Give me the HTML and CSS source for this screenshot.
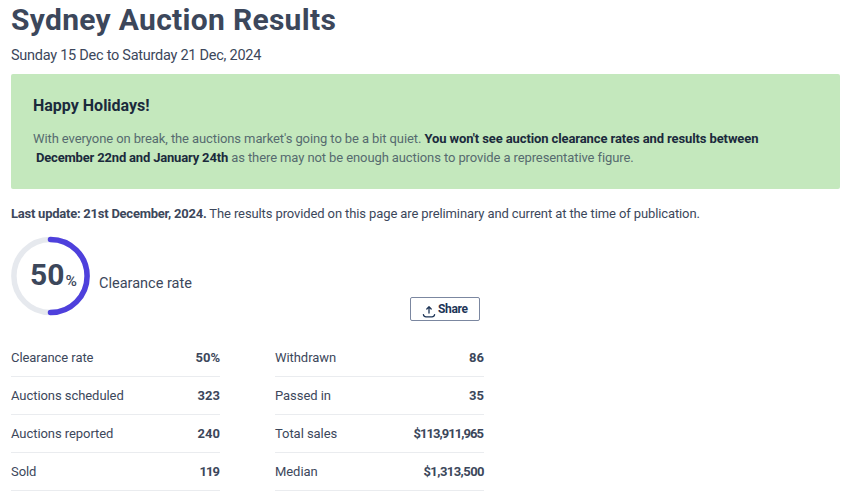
FILE: index.html
```html
<!DOCTYPE html>
<html lang="en">
<head>
    <meta charset="UTF-8">
    <meta name="viewport" content="width=device-width, initial-scale=1.0">
    <title>Sydney Auction Results</title>
    <link rel="stylesheet" href="styles.css">
</head>
<body>
    <h1>Sydney Auction Results</h1>
    <p class="dates">Sunday 15 Dec to Saturday 21 Dec, 2024</p>

    <div class="notice">
        <h2>Happy Holidays!</h2>
        <p><span class="quiet">With everyone on break, the auctions market's going to be a bit quiet.</span> <strong class="warn">You won't see auction clearance rates and results between</strong><br>
        <strong class="period">December 22nd and January 24th</strong> <span class="reason">as there may not be enough auctions to provide a representative figure.</span></p>
    </div>

    <p class="update"><strong>Last update: 21st December, 2024.</strong> <span>The results provided on this page are preliminary and current at the time of publication.</span></p>

    <div class="summary">
        <div class="dial">
            <svg width="79" height="80" viewBox="0 0 79 80" fill="none" stroke-width="5.5">
                <circle cx="39.5" cy="40" r="36.6" stroke="#e6e9ee"/>
                <path d="M39.5 3.4a36.6 36.6 0 0 1 0 73.2" stroke="#4e40dc" stroke-linecap="round"/>
            </svg>
            <div class="dial-value"><b>50</b><span>%</span></div>
        </div>
        <span class="dial-label">Clearance rate</span>
        <button class="share">
            <svg width="14" height="14" viewBox="0 0 14 14" fill="none" stroke="#1e3557" stroke-width="1.3" stroke-linecap="round" stroke-linejoin="round">
                <path d="M7 9V3M4.8 5L7 2.8 9.2 5M1.4 10.6c.3 1.500 1.200 2.200 2.600 2.200h6c1.400 0 2.300-.7 2.600-2.200"/>
            </svg>
            <span>Share</span>
        </button>
    </div>

    <div class="stats">
        <dl>
            <div><dt>Clearance rate</dt><dd>50%</dd></div>
            <div><dt>Auctions scheduled</dt><dd>323</dd></div>
            <div><dt>Auctions reported</dt><dd>240</dd></div>
            <div><dt>Sold</dt><dd class="tight">119</dd></div>
        </dl>
        <dl>
            <div><dt>Withdrawn</dt><dd>86</dd></div>
            <div><dt>Passed in</dt><dd>35</dd></div>
            <div><dt>Total sales</dt><dd class="tight">$113,911,965</dd></div>
            <div><dt>Median</dt><dd class="money">$1,313,500</dd></div>
        </dl>
    </div>
</body>
</html>
```
FILE: styles.css
```css
* {
    box-sizing: border-box;
    margin: 0;
    padding: 0;
}
body {
    font-family: Roboto, "Liberation Sans", sans-serif;
    font-size: 13px;
    line-height: 18px;
    color: #3c475b;
    background-color: #fff;
    padding: 0 10px 0 11px;
    overflow: hidden;
}
h1 {
    font-size: 30px;
    line-height: 40px;
    letter-spacing: 0.3px;
}
.dates {
    font-size: 14.5px;
    line-height: 20px;
    margin-top: 6px;
    letter-spacing: -0.26px;
}
.notice {
    height: 115px;
    margin-top: 8px;
    padding: 23px 22px;
    border-radius: 2px;
    background-color: #c4e8bd;
    color: #566b6f;
}
.notice h2 {
    font-size: 16px;
    line-height: 18px;
    color: #1b2a3c;
}
.notice p {
    margin-top: 15px;
    line-height: 18.5px;
    white-space: nowrap;
}
.notice strong {
    color: #1b2a3c;
}
.quiet, .reason {
    letter-spacing: -0.1px;
}
.warn {
    letter-spacing: -0.11px;
}
.period {
    margin-left: 3px;
    letter-spacing: -0.18px;
}
.update {
    margin-top: 16px;
    letter-spacing: -0.11px;
    white-space: nowrap;
}
.update strong {
    letter-spacing: -0.24px;
}
.summary {
    display: flex;
    width: 469px;
    height: 88px;
    margin-top: 13px;
}
.dial {
    display: grid;
    width: 79px;
    height: 80px;
}
.dial svg, .dial-value {
    grid-area: 1 / 1;
}
.dial-value {
    padding: 21px 0 0 19px;
    line-height: 36px;
    white-space: nowrap;
}
.dial-value b {
    font-size: 30px;
}
.dial-value span {
    margin-left: 1px;
    font-size: 15.5px;
    font-weight: 500;
    line-height: 1;
    vertical-align: -1px;
}
.dial-label {
    margin: 39px 0 0 9px;
    font-size: 14.5px;
}
.share {
    display: flex;
    align-items: center;
    gap: 2px;
    width: 70px;
    height: 24px;
    margin: 61px 0 0 auto;
    padding-left: 11px;
    border: 1px solid #7b87a0;
    border-radius: 2px;
    background-color: #fff;
    color: #1e3557;
    font: bold 12px/18px Roboto, "Liberation Sans", sans-serif;
    letter-spacing: -0.35px;
}
.share svg {
    margin-top: 4px;
}
.stats {
    display: flex;
    gap: 55px;
    margin-top: 15px;
}
.stats dl {
    width: 209px;
}
.stats dl div {
    display: flex;
    justify-content: space-between;
    height: 38px;
    padding-top: 10px;
    border-bottom: 1px solid #eaecef;
}
.stats dt {
    letter-spacing: -0.06px;
}
.stats dd {
    font-weight: bold;
}
.stats .tight {
    margin-right: 1px;
    letter-spacing: -0.95px;
}
.stats .money {
    letter-spacing: -0.55px;
}
```
